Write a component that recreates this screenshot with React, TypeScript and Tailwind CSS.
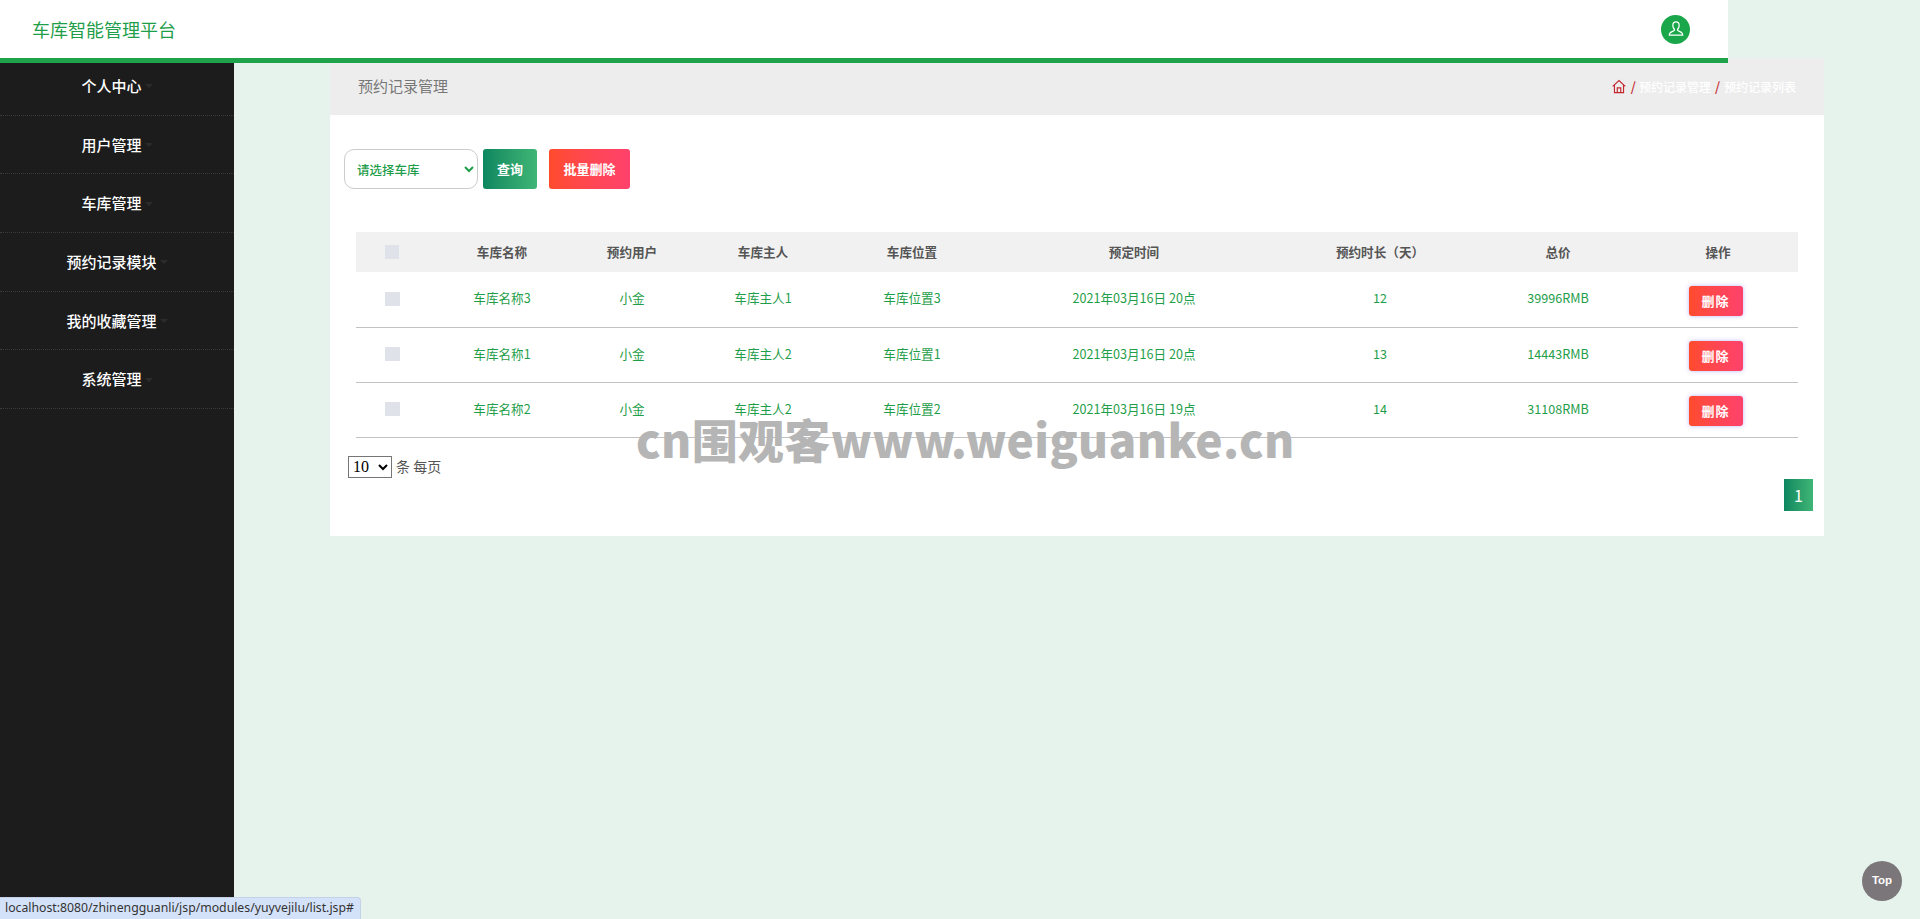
import React from 'react';

const sidebarItems = ['个人中心', '用户管理', '车库管理', '预约记录模块', '我的收藏管理', '系统管理'];

const rows = [
  { name: '车库名称3', user: '小金', owner: '车库主人1', place: '车库位置3', time: '2021年03月16日 20点', days: '12', price: '39996RMB' },
  { name: '车库名称1', user: '小金', owner: '车库主人2', place: '车库位置1', time: '2021年03月16日 20点', days: '13', price: '14443RMB' },
  { name: '车库名称2', user: '小金', owner: '车库主人2', place: '车库位置2', time: '2021年03月16日 19点', days: '14', price: '31108RMB' },
];

const headers = ['车库名称', '预约用户', '车库主人', '车库位置', '预定时间', '预约时长（天）', '总价', '操作'];

function UserIcon() {
  return (
    <svg viewBox="0 0 20 20" className="w-[18px] h-[18px]" fill="none" stroke="currentColor" strokeWidth="1.4">
      <path d="M10 2.2c-2.2 0-3.5 1.6-3.5 3.9 0 1.7.7 3 1.5 3.9.5.6.4 1.5-.3 1.9-1.2.7-3 1.2-4.1 2.2-.7.6-1 1.4-1 2.6h14.8c0-1.2-.3-2-1-2.6-1.1-1-2.9-1.5-4.1-2.2-.7-.4-.8-1.3-.3-1.9.8-.9 1.5-2.2 1.5-3.9 0-2.3-1.3-3.9-3.5-3.9z" />
    </svg>
  );
}

function HomeIcon() {
  return (
    <svg viewBox="0 0 16 16" className="w-[14px] h-[15px] text-[#c4262e]" fill="none" stroke="currentColor" strokeWidth="1.3">
      <path d="M.8 7.8 8 1.2l7.2 6.6" />
      <path d="M2.8 6.4v8.6h10.4V6.4" />
      <path d="M6 15V9.6h4V15" />
    </svg>
  );
}

export default function App() {
  return (
    <div className="h-screen overflow-hidden bg-[#e6f3ec] font-['Noto_Sans_CJK_SC','Noto_Sans',sans-serif] relative">
      {/* Header */}
      <header className="relative z-10 w-[1728px] h-[63px] bg-white border-b-[5px] border-[#1fa34a] flex items-center justify-between pl-[32px] pr-[38px]">
        <div className="text-[18px] text-[#1f9e4a]">车库智能管理平台</div>
        <div className="w-[29px] h-[29px] rounded-full bg-[#1aa64a] text-white flex items-center justify-center">
          <UserIcon />
        </div>
      </header>

      <div className="flex -mt-[5px] h-[calc(100vh-58px)]">
        {/* Sidebar */}
        <aside className="w-[234px] shrink-0 bg-[#1c1c1c]">
          <nav className="-mt-[1px]">
            {sidebarItems.map((item) => (
              <div key={item} className="h-[58.67px] pt-[1px] flex items-center justify-center gap-[3px] border-b border-dotted border-[#3a3a3a] text-[15px] font-medium text-white">
                <span>{item}</span>
                <span className="w-0 h-0 border-x-[4px] border-x-transparent border-t-[4px] border-t-[#2b2b2b]" />
              </div>
            ))}
          </nav>
        </aside>

        {/* Main */}
        <main className="ml-[96px] w-[1494px] self-start">
          <div className="h-[57px] bg-[#ededed] flex items-center justify-between pl-[28px] pr-[28px]">
            <h2 className="text-[15px] text-[#777777]">预约记录管理</h2>
            <div className="flex items-center text-[12px] font-medium text-white">
              <HomeIcon />
              <span className="ml-[5px] mr-[3px] text-[#c4262e] text-[13px]">/</span>
              <span>预约记录管理</span>
              <span className="mx-[4px] text-[#c4262e] text-[13px]">/</span>
              <span>预约记录列表</span>
            </div>
          </div>

          <div className="h-[421px] bg-white relative pt-[34px]">
            <div className="flex items-center pl-[14px]">
              <select className="w-[134px] h-[40px] bg-white border border-[#cccccc] rounded-[10px] pl-[8px] text-[12.5px] font-medium text-[#1f9e4a]">
                <option>请选择车库</option>
              </select>
              <button className="ml-[5px] w-[54px] h-[40px] rounded-[3px] bg-linear-to-r from-[#0b8760] to-[#3fb676] text-white text-[13px] font-bold">查询</button>
              <button className="ml-[12px] w-[81px] h-[40px] rounded-[3px] bg-linear-to-r from-[#ff4b2b] to-[#ff416c] text-white text-[13px] font-bold">批量删除</button>
            </div>

            <table className="ml-[26px] mt-[43px] w-[1442px] table-fixed border-collapse">
              <colgroup>
                <col className="w-[72px]" />
                <col className="w-[148px]" />
                <col className="w-[112px]" />
                <col className="w-[150px]" />
                <col className="w-[148px]" />
                <col className="w-[296px]" />
                <col className="w-[196px]" />
                <col className="w-[160px]" />
                <col className="w-[160px]" />
              </colgroup>
              <thead>
                <tr className="h-[40px] bg-[#f1f1f1]">
                  <th className="p-0">
                    <div className="ml-[29px] w-[14px] h-[14px] bg-[#dfe2e8]" />
                  </th>
                  {headers.map((h) => (
                    <th key={h} className="p-0 text-[12.6px] font-bold text-[#555555]">{h}</th>
                  ))}
                </tr>
              </thead>
              <tbody>
                {rows.map((r) => (
                  <tr key={r.name} className="h-[55px] border-b border-[#c2c2c2] text-[12.6px] text-[#1f9e4a] text-center">
                    <td className="p-0">
                      <div className="ml-[29px] -mt-[1px] w-[15px] h-[14px] bg-[#dfe2e8]" />
                    </td>
                    <td className="p-0 pb-[1px]">{r.name}</td>
                    <td className="p-0 pb-[1px]">{r.user}</td>
                    <td className="p-0 pb-[1px]">{r.owner}</td>
                    <td className="p-0 pb-[1px]">{r.place}</td>
                    <td className="p-0 pb-[1px]">{r.time}</td>
                    <td className="p-0 pb-[1px]">{r.days}</td>
                    <td className="p-0 pb-[1px]">{r.price}</td>
                    <td className="p-0">
                      <button className="mr-[5px] mt-[3px] w-[54px] h-[30px] rounded-[3px] bg-linear-to-r from-[#ff4b2b] to-[#ff416c] text-white text-[13px] font-bold tracking-[1px] shadow-[0_0_4px_rgba(120,120,255,0.5)]">删除</button>
                    </td>
                  </tr>
                ))}
              </tbody>
            </table>

            <div className="ml-[18px] mt-[18px] flex items-center text-[14px] text-[#555555]">
              <select className="w-[44px] h-[22px] border border-[#767676] bg-white text-black text-[16px] font-['Liberation_Serif',serif]">
                <option>10</option>
              </select>
              <span className="ml-[4px]">条 每页</span>
            </div>

            <div className="flex justify-end pr-[11px] mt-[1px]">
              <div className="w-[29px] h-[32px] flex items-center justify-center bg-linear-to-r from-[#0b8760] to-[#3fb676] text-white text-[16px]">1</div>
            </div>
          </div>
        </main>
      </div>

      {/* Watermark */}
      <div className="absolute left-[636px] top-[408px] z-20 text-[46px] leading-[60px] font-black tracking-[0.35px] text-[#b5b5b5] whitespace-nowrap pointer-events-none">cn围观客www.weiguanke.cn</div>

      {/* Back to top */}
      <div className="absolute left-[1862px] top-[861px] w-[40px] h-[40px] rounded-full bg-[#7b767a] flex items-center justify-center text-white text-[11.5px] font-bold font-['Liberation_Sans',sans-serif]">Top</div>

      {/* Browser status bubble */}
      <div className="absolute left-0 bottom-0 z-20 w-[361px] h-[22px] bg-[#d3e2f9] rounded-tr-[4px] border-t border-r border-[#c3d2e8] pl-[5px] flex items-center text-[12.25px] text-[#333333] font-['Noto_Sans',sans-serif] whitespace-nowrap">localhost:8080/zhinengguanli/jsp/modules/yuyvejilu/list.jsp#</div>
    </div>
  );
}
